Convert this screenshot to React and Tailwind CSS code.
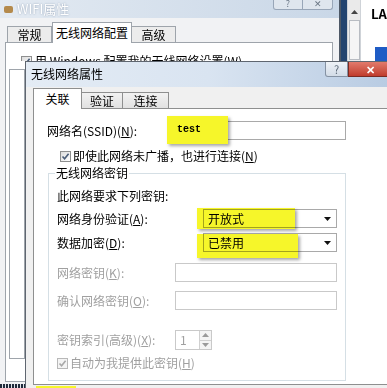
import React from 'react'

const FONT = "font-['Noto_Sans_CJK_SC','Microsoft_YaHei',sans-serif]"

function Check({ disabled }) {
  return (
    <span
      className={`flex h-[11px] w-[11px] items-center justify-center border ${
        disabled ? 'border-[#b8b8b8] bg-[#f4f4f4]' : 'border-[#8e8f8f] bg-gradient-to-br from-[#dcdcdc] to-white'
      }`}
    >
      <svg width="9" height="9" viewBox="0 0 9 9">
        <path
          d="M1.5 4.5 L3.6 6.8 L7.6 1.8"
          fill="none"
          stroke={disabled ? '#a8a8a8' : '#4a5d78'}
          strokeWidth="1.6"
        />
      </svg>
    </span>
  )
}

function Arrow({ up, color = '#111' }) {
  return (
    <svg width="7" height="4" viewBox="0 0 7 4">
      <path d={up ? 'M0 4 L3.5 0 L7 4 Z' : 'M0 0 L7 0 L3.5 4 Z'} fill={color} />
    </svg>
  )
}

function Combo({ value }) {
  return (
    <div className="flex h-[19px] w-[134px] items-center justify-between border border-[#a9a9a9] bg-white pl-[4px] pr-[5px]">
      <span>{value}</span>
      <Arrow />
    </div>
  )
}

function Box({ w = 162, children }) {
  return (
    <div
      className="flex h-[19px] items-center border border-[#c9c9c9] bg-white pl-[4px]"
      style={{ width: w }}
    >
      {children}
    </div>
  )
}

function Mn({ c }) {
  return <span className="underline">{c}</span>
}

export default function App() {
  return (
    <div className={`relative h-[388px] w-[387px] overflow-hidden bg-white text-[12px] leading-[16px] text-black ${FONT}`}>
      {/* ── background window: WIFI属性 ── */}
      <div className="absolute left-0 top-0 flex h-[388px] w-[341px] flex-col border-r-2 border-[#4d5866] bg-[#f1f2f4]">
        <div className="flex h-[18px] shrink-0 items-center justify-between bg-gradient-to-r from-[#e3eaf2] to-[#c9d7e7] pl-[4px] pr-[6px]">
          <div className="flex items-center gap-[4px]">
            <span className="h-[7px] w-[9px] rounded-[2px] bg-[#b48a4c]" />
            <span className="text-[13px] text-white [text-shadow:0_0_2px_#8b9bb0]">WIFI属性</span>
          </div>
          <div className="-mt-[4px] flex self-start">
            <span className="flex h-[14px] w-[30px] items-end justify-center rounded-bl-[3px] border border-t-0 border-[#98a6b8] bg-[#dfe6ee] text-[9px] leading-[11px] text-[#6a7684]">?</span>
            <span className="flex h-[14px] w-[30px] items-end justify-center rounded-br-[3px] border border-l-0 border-t-0 border-[#98a6b8] bg-[#dfe6ee] text-[9px] leading-[11px] text-[#6a7684]">✕</span>
          </div>
        </div>
        <div className="flex h-[24px] shrink-0 items-end pl-[7px]">
          <span className="flex h-[16px] w-[45px] items-center justify-center border border-b-0 border-[#9ea4ab] bg-[#ececec]">常规</span>
          <span className="-mb-px z-10 flex h-[21px] w-[80px] items-center justify-center border border-b-0 border-[#9ea4ab] bg-white">无线网络配置</span>
          <span className="flex h-[16px] w-[44px] items-center justify-center border border-b-0 border-l-0 border-[#9ea4ab] bg-[#ececec]">高级</span>
        </div>
        <div className="ml-[5px] flex h-[340px] w-[328px] flex-col border border-[#9ea4ab] bg-white pl-[3px]">
          <div className="h-[18px] overflow-hidden">
            <div className="mt-[10px] flex items-center gap-[3px] pl-[12px]">
              <Check />
              <span>用 Windows 配置我的无线网络设置(W)</span>
            </div>
          </div>
          <div className="mt-[8px] h-[290px] w-[16px] border border-[#9ea4ab]" />
        </div>
      </div>

      {/* ── window at the right edge ── */}
      <div className="absolute left-[341px] top-0 flex h-[62px] w-[46px]">
        <div className="h-full w-[7px] bg-[#23446f]" />
        <div className="flex h-full w-[15px] flex-col items-center border-x border-[#cfd3d8] bg-[#eaeaea] pt-[10px]">
          <Arrow up color="#444" />
          <div className="mt-[6px] h-[40px] w-[11px] border border-[#b8bcc2] bg-[#f5f5f5]" />
        </div>
        <div className="flex flex-1 flex-col pl-[10px] pt-[6px]">
          <span className="text-[13px] font-bold">LA</span>
          <span className="ml-[4px] mt-[25px] h-[15px] w-[12px] bg-[#1f5cc5]" />
        </div>
      </div>

      {/* ── front dialog: 无线网络属性 ── */}
      <div className="absolute left-[25px] top-[61px] flex h-[330px] w-[367px] flex-col border-l border-t border-[#5f6670] bg-[#f0f0f0]">
        <div className="flex h-[25px] shrink-0 items-start justify-between bg-gradient-to-r from-[#e4ecf5] via-[#d9e4f1] to-[#b8cbe2] pl-[5px]">
          <span className="mt-[4px]">无线网络属性</span>
          <div className="flex">
            <span className="flex h-[15px] w-[23px] items-center justify-center rounded-bl-[3px] border border-t-0 border-[#8592a3] bg-gradient-to-b from-[#eef2f7] to-[#d3dce7] text-[11px] text-[#5b6877]">?</span>
            <span className="flex h-[15px] w-[44px] items-center justify-center border border-t-0 border-[#7a2a22] bg-gradient-to-b from-[#e27a6c] to-[#c03b2c] text-[11px] font-bold text-white">✕</span>
          </div>
        </div>

        {/* tabs */}
        <div className="flex h-[21px] shrink-0 items-end pl-[7px]">
          <span className="z-10 -mb-px flex h-[21px] w-[49px] items-center justify-center border border-b-0 border-[#8e8f8f] bg-white">关联</span>
          <span className="flex h-[16px] w-[41px] items-center justify-center border border-b-0 border-l-0 border-[#8e8f8f] bg-gradient-to-b from-[#f2f2f2] to-[#e1e1e1]">验证</span>
          <span className="flex h-[16px] w-[46px] items-center justify-center border border-b-0 border-l-0 border-[#8e8f8f] bg-gradient-to-b from-[#f2f2f2] to-[#e1e1e1]">连接</span>
        </div>

        {/* tab panel */}
        <div className="relative ml-[7px] flex w-[358px] shrink-0 flex-col border border-[#8e8f8f] bg-white pb-[3px]">
          <div className="ml-[13px] mt-[12px] flex h-[19px] items-center">
            <span className="w-[128px]">
              网络名(SSID)(<Mn c="N" />):
            </span>
            <div className="h-[19px] w-[171px] border border-[#a9a9a9] bg-white" />
          </div>

          <div className="ml-[26px] mt-[8px] flex h-[16px] items-center gap-[2px]">
            <Check />
            <span>
              即使此网络未广播，也进行连接(<Mn c="N" />)
            </span>
          </div>

          <fieldset className="ml-[14px] mt-px w-[298px] border border-[#d5dfe5] pb-[9px] pl-[8px]">
            <legend className="-ml-[2px] px-[1px]">无线网络密钥</legend>
            <div className="mt-[7px]">此网络要求下列密钥:</div>

            <div className="mt-[5px] flex items-center">
              <span className="w-[146px]">
                网络身份验证(<Mn c="A" />):
              </span>
              <Combo value="开放式" />
            </div>
            <div className="mt-[5px] flex items-center">
              <span className="w-[146px]">
                数据加密(<Mn c="D" />):
              </span>
              <Combo value="已禁用" />
            </div>

            <div className="mt-[11px] flex items-center text-[#a0a0a0]">
              <span className="w-[118px]">
                网络密钥(<Mn c="K" />):
              </span>
              <Box />
            </div>
            <div className="mt-[9px] flex items-center text-[#a0a0a0]">
              <span className="w-[118px]">
                确认网络密钥(<Mn c="O" />):
              </span>
              <Box />
            </div>

            <div className="mt-[20px] flex items-center text-[#a0a0a0]">
              <span className="w-[118px]">
                密钥索引(高级)(<Mn c="X" />):
              </span>
              <div className="flex h-[20px] w-[37px] items-center justify-between border border-[#c9c9c9] bg-white pl-[4px]">
                <span>1</span>
                <div className="flex h-full w-[12px] flex-col border-l border-[#d0d0d0]">
                  <span className="flex flex-1 items-center justify-center border-b border-[#d0d0d0] bg-[#f4f4f4]">
                    <Arrow up color="#9a9a9a" />
                  </span>
                  <span className="flex flex-1 items-center justify-center bg-[#f4f4f4]">
                    <Arrow color="#9a9a9a" />
                  </span>
                </div>
              </div>
            </div>

            <div className="mt-[5px] flex h-[16px] items-center gap-[2px] text-[#a0a0a0]">
              <Check disabled />
              <span>
                自动为我提供此密钥(<Mn c="H" />)
              </span>
            </div>
          </fieldset>

          {/* marker highlights drawn over the dialog */}
          <div className="absolute left-[133px] top-[7px] flex h-[28px] w-[61px] items-center bg-[#f6f62a] pl-[10px] font-['Liberation_Mono',monospace] text-[10px] font-bold shadow-[2px_2px_3px_rgba(0,0,0,0.35)]">
            test
          </div>
          <div className="absolute left-[163px] top-[99px] h-[21px] w-[98px] bg-[#f6f62a] mix-blend-multiply shadow-[2px_2px_3px_rgba(0,0,0,0.35)]" />
          <div className="absolute left-[163px] top-[125px] h-[24px] w-[101px] bg-[#f6f62a] mix-blend-multiply shadow-[2px_2px_3px_rgba(0,0,0,0.35)]" />
        </div>

        <div className="ml-[10px] mt-px h-[6px] w-[40px] bg-[#f6f62a]" />
      </div>

      {/* dotted strip at the bottom left */}
      <div className="absolute bottom-0 left-0 h-[4px] w-[25px] bg-[repeating-linear-gradient(90deg,#1f2a3a_0_2px,#e0e4ea_2px_3px)]" />
    </div>
  )
}
